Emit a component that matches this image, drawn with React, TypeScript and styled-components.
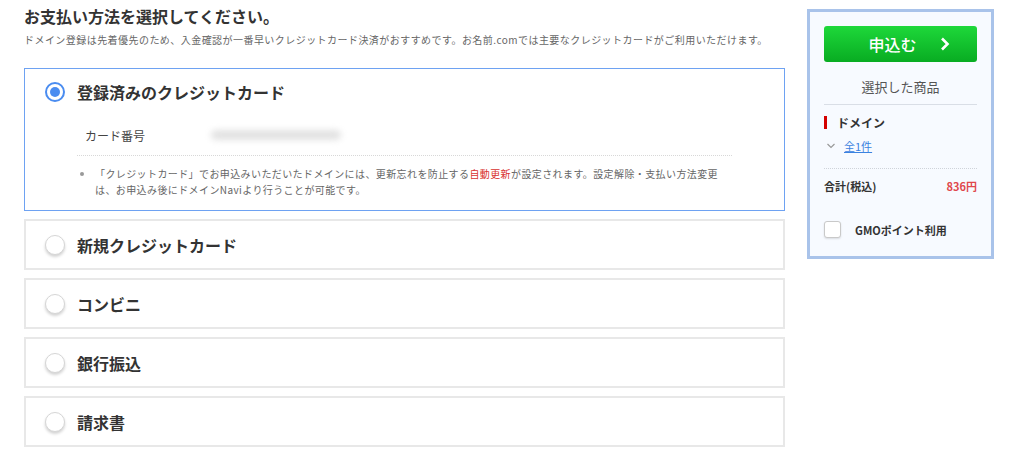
import React from 'react';
import styled, { createGlobalStyle } from 'styled-components';

const GlobalStyle = createGlobalStyle`
  body {
    margin: 0;
    background: #fff;
    font-family: "Noto Sans CJK JP", "Noto Sans", sans-serif;
    color: #333;
  }
`;

const Page = styled.div`
  display: flex;
  align-items: flex-start;
  padding: 4px 0 0 24px;
  width: 1024px;
  box-sizing: border-box;
`;
const Main = styled.div`
  width: 761px;
  display: flex;
  flex-direction: column;
`;
const Title = styled.h1`
  margin: 0;
  font-size: 16px;
  font-weight: 700;
  line-height: 24px;
  color: #333;
`;
const Lead = styled.p`
  margin: 4px 0 0;
  font-size: 10px;
  line-height: 16px;
  color: #666;
  white-space: nowrap;
  letter-spacing: 0.45px;
`;
const Options = styled.div`
  display: flex;
  flex-direction: column;
  gap: 8px;
  margin-top: 20px;
`;
const Option = styled.div<{ $active?: boolean }>`
  box-sizing: border-box;
  border: ${(p) => (p.$active ? '1px solid #6ea2f2' : '2px solid #e8e8e8')};
  background: #fff;
  padding: ${(p) => (p.$active ? '0 20px 12px 20px' : '0 19px')};
  min-height: ${(p) => (p.$active ? '143px' : '51px')};
`;
const OptionHead = styled.label<{ $active?: boolean }>`
  display: flex;
  align-items: center;
  gap: 12px;
  height: ${(p) => (p.$active ? '46px' : '47px')};
`;
const Radio = styled.span<{ $checked?: boolean }>`
  width: 20px;
  height: 20px;
  border-radius: 50%;
  box-sizing: border-box;
  background: #fff;
  flex-shrink: 0;
  display: flex;
  align-items: center;
  justify-content: center;
  border: ${(p) => (p.$checked ? '2px solid #4a8cf0' : '1px solid #d6d6d6')};
  box-shadow: ${(p) => (p.$checked ? 'none' : '0 2px 3px rgba(0,0,0,0.18)')};
  &::after {
    content: '';
    display: ${(p) => (p.$checked ? 'block' : 'none')};
    width: 10px;
    height: 10px;
    border-radius: 50%;
    background: #4a8cf0;
  }
`;
const OptionLabel = styled.span`
  font-size: 16px;
  font-weight: 700;
  color: #333;
`;
const Detail = styled.div`
  margin-left: 32px;
  width: 655px;
`;
const CardRow = styled.div`
  display: flex;
  align-items: center;
  height: 40px;
  padding-left: 8px;
  border-bottom: 1px dotted #d8d8d8;
`;
const CardLabel = styled.span`
  font-size: 12px;
  color: #444;
  width: 126px;
`;
const Masked = styled.span`
  width: 130px;
  height: 10px;
  border-radius: 5px;
  background: #e2e2e2;
  filter: blur(3px);
`;
const Note = styled.ul`
  margin: 10px 0 0;
  padding: 0 0 0 18px;
  font-size: 10px;
  line-height: 16px;
  color: #666;
  letter-spacing: 0.4px;
  li::marker {
    color: #999;
  }
`;
const Red = styled.span`
  color: #d9322f;
`;

const Side = styled.aside`
  margin: 5px 0 0 22px;
  width: 187px;
  box-sizing: border-box;
  border: 3px solid #a9c3ea;
  background: #f7faff;
  padding: 14px 14px 18px;
  display: flex;
  flex-direction: column;
`;
const ApplyButton = styled.button`
  height: 36px;
  border: none;
  border-radius: 3px;
  background: linear-gradient(#1ed83a, #08ac22);
  color: #fff;
  font-family: inherit;
  font-size: 16px;
  font-weight: 500;
  display: flex;
  align-items: center;
  justify-content: center;
  gap: 22px;
  padding-left: 24px;
  cursor: pointer;
`;
const Selected = styled.div`
  text-align: center;
  font-size: 13px;
  color: #555;
  padding: 15px 0 8px;
  border-bottom: 1px solid #d9dee6;
`;
const ItemTitle = styled.div`
  display: flex;
  align-items: center;
  gap: 10px;
  margin-top: 9px;
  font-size: 12px;
  font-weight: 700;
  color: #333;
  &::before {
    content: '';
    width: 3px;
    height: 13px;
    background: #d40000;
  }
`;
const CountRow = styled.div`
  display: flex;
  align-items: center;
  gap: 8px;
  margin-top: 7px;
  padding: 0 0 14px 2px;
  border-bottom: 1px dotted #cfd3da;
`;
const CountLink = styled.a`
  font-size: 11px;
  color: #3b82e0;
  text-decoration: underline;
`;
const TotalRow = styled.div`
  display: flex;
  justify-content: space-between;
  align-items: center;
  margin-top: 9px;
  font-size: 11px;
  font-weight: 700;
`;
const Price = styled.span`
  color: #e0474c;
`;
const PointRow = styled.label`
  display: flex;
  align-items: center;
  gap: 14px;
  margin-top: 27px;
  font-size: 11px;
  font-weight: 700;
  color: #333;
`;
const Check = styled.span`
  width: 17px;
  height: 17px;
  box-sizing: border-box;
  border: 1px solid #c9c9c9;
  border-radius: 3px;
  background: #fff;
  box-shadow: 0 1px 2px rgba(0,0,0,0.12);
`;

const others = ['新規クレジットカード', 'コンビニ', '銀行振込', '請求書'];

const App: React.FC = () => {
  return (
    <>
      <GlobalStyle />
      <Page>
        <Main>
          <Title>お支払い方法を選択してください。</Title>
          <Lead>
            ドメイン登録は先着優先のため、入金確認が一番早いクレジットカード決済がおすすめです。お名前.comでは主要なクレジットカードがご利用いただけます。
          </Lead>
          <Options>
            <Option $active>
              <OptionHead $active>
                <Radio $checked />
                <OptionLabel>登録済みのクレジットカード</OptionLabel>
              </OptionHead>
              <Detail>
                <CardRow>
                  <CardLabel>カード番号</CardLabel>
                  <Masked />
                </CardRow>
                <Note>
                  <li>
                    「クレジットカード」でお申込みいただいたドメインには、更新忘れを防止する<Red>自動更新</Red>が設定されます。設定解除・支払い方法変更は、お申込み後にドメインNaviより行うことが可能です。
                  </li>
                </Note>
              </Detail>
            </Option>
            {others.map((o) => (
              <Option key={o}>
                <OptionHead>
                  <Radio />
                  <OptionLabel>{o}</OptionLabel>
                </OptionHead>
              </Option>
            ))}
          </Options>
        </Main>
        <Side>
          <ApplyButton>
            申込む
            <svg width="12" height="14" viewBox="0 0 12 14">
              <path d="M3 1.5 L8.5 7 L3 12.5" fill="none" stroke="#fff" strokeWidth="2.6" />
            </svg>
          </ApplyButton>
          <Selected>選択した商品</Selected>
          <ItemTitle>ドメイン</ItemTitle>
          <CountRow>
            <svg width="10" height="8" viewBox="0 0 10 8">
              <path d="M1.5 2 L5 5.5 L8.5 2" fill="none" stroke="#999" strokeWidth="1.2" />
            </svg>
            <CountLink href="#">全1件</CountLink>
          </CountRow>
          <TotalRow>
            <span>合計(税込)</span>
            <Price>836円</Price>
          </TotalRow>
          <PointRow>
            <Check />
            GMOポイント利用
          </PointRow>
        </Side>
      </Page>
    </>
  );
};

export default App;
